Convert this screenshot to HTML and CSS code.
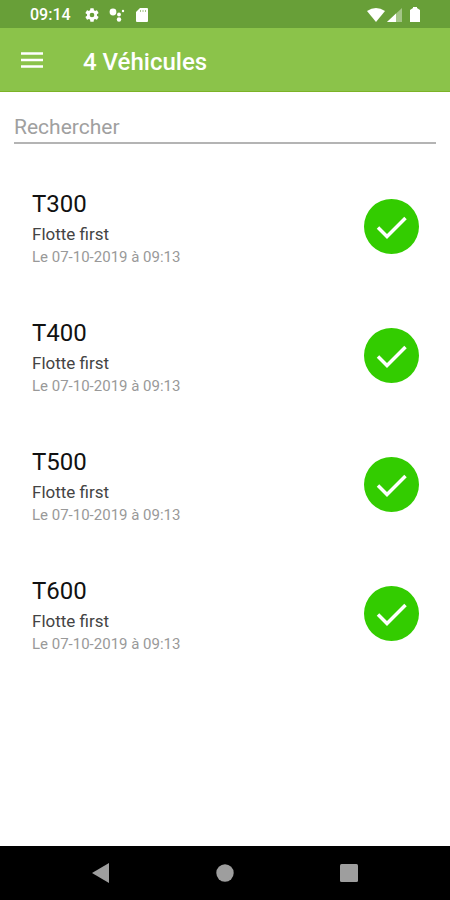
FILE: index.html
```html
<!DOCTYPE html>
<html lang="fr">
<head>
    <meta charset="UTF-8">
    <meta name="viewport" content="width=device-width, initial-scale=1.0">
    <title>Véhicules</title>
    <link rel="stylesheet" href="styles.css">
</head>
<body>
    <div class="statusbar">
        <span class="time">09:14</span>
        <svg class="gear" width="16" height="16" viewBox="0 0 24 24"><path fill="#fff" d="M19.4 13a7.5 7.5 0 0 0 0-2l2.2-1.700a.5.5 0 0 0 .1-.6l-2-3.500a.5.5 0 0 0-.6-.2l-2.500 1a7.300 7.300 0 0 0-1.700-1L14.500 2.400a.5.5 0 0 0-.5-.4h-4a.5.5 0 0 0-.5.400L9.100 5a7.700 7.700 0 0 0-1.700 1l-2.500-1a.5.5 0 0 0-.6.200l-2 3.500a.5.5 0 0 0 .1.600L4.600 11a7.900 7.900 0 0 0 0 2l-2.200 1.700a.5.5 0 0 0-.1.600l2 3.500c.1.200.4.300.6.200l2.500-1a7.300 7.300 0 0 0 1.700 1l.4 2.600c0 .2.200.4.500.4h4c.3 0 .5-.2.500-.4l.4-2.600a7.700 7.700 0 0 0 1.700-1l2.500 1c.2.100.5 0 .6-.2l2-3.500a.5.5 0 0 0-.1-.6zM12 15.500a3.500 3.500 0 1 1 0-7 3.500 3.500 0 0 1 0 7z"/></svg>
        <svg class="dots" width="16" height="16" viewBox="0 0 16 16" fill="#fff"><circle cx="4" cy="5" r="3.400"/><circle cx="10" cy="7.500" r="1.900"/><circle cx="10" cy="12.500" r="2.200"/><circle cx="14" cy="4" r="1.200"/></svg>
        <svg width="12" height="14" viewBox="0 0 12 14"><path fill="#fff" d="M4 0h7q1 0 1 1v12q0 1-1 1H1q-1 0-1-1V4z"/><path stroke="#689f38" stroke-opacity=".6" d="M4.500 2v2M7 2v2M9.500 2v2"/></svg>
        <span class="space"></span>
        <svg width="18" height="14" viewBox="0 0 18 14"><path fill="#fff" d="M0 3Q9-3 18 3L9 14z"/></svg>
        <svg class="signal" width="15" height="14" viewBox="0 0 15 14"><path fill="#fff" fill-opacity=".4" d="M15 0v14H0z"/><path fill="#fff" d="M9 5.600V14H0z"/></svg>
        <svg class="battery" width="10" height="15" viewBox="0 0 10 15"><path fill="#fff" d="M3 0h4v1L10 3v12H0V3l3-2z"/></svg>
    </div>

    <header class="toolbar">
        <button type="button" class="menubtn" aria-label="Menu">
            <svg width="22" height="16" viewBox="0 0 22 16"><path stroke="#fff" stroke-width="2.400" d="M0 1.500h22M0 8h22M0 14.500h22"/></svg>
        </button>
        <h1>4 Véhicules</h1>
    </header>

    <main>
        <form class="search">
            <input type="text" name="search" placeholder="Rechercher" aria-label="Rechercher">
        </form>
        <ul class="vehicles">
            <li class="vehicle">
                <div class="info">
                    <h2>T300</h2>
                    <p class="fleet">Flotte first</p>
                    <p class="date">Le 07-10-2019 à 09:13</p>
                </div>
                <svg class="check" viewBox="0 0 55 55"><circle cx="27.500" cy="27.500" r="27.500" fill="#33cc00"/><path fill="none" stroke="#fff" stroke-width="3.500" d="M14 28.500l9 9 18.500-18.500"/></svg>
            </li>
            <li class="vehicle">
                <div class="info">
                    <h2>T400</h2>
                    <p class="fleet">Flotte first</p>
                    <p class="date">Le 07-10-2019 à 09:13</p>
                </div>
                <svg class="check" viewBox="0 0 55 55"><circle cx="27.500" cy="27.500" r="27.500" fill="#33cc00"/><path fill="none" stroke="#fff" stroke-width="3.500" d="M14 28.500l9 9 18.500-18.500"/></svg>
            </li>
            <li class="vehicle">
                <div class="info">
                    <h2>T500</h2>
                    <p class="fleet">Flotte first</p>
                    <p class="date">Le 07-10-2019 à 09:13</p>
                </div>
                <svg class="check" viewBox="0 0 55 55"><circle cx="27.500" cy="27.500" r="27.500" fill="#33cc00"/><path fill="none" stroke="#fff" stroke-width="3.500" d="M14 28.500l9 9 18.500-18.500"/></svg>
            </li>
            <li class="vehicle">
                <div class="info">
                    <h2>T600</h2>
                    <p class="fleet">Flotte first</p>
                    <p class="date">Le 07-10-2019 à 09:13</p>
                </div>
                <svg class="check" viewBox="0 0 55 55"><circle cx="27.500" cy="27.500" r="27.500" fill="#33cc00"/><path fill="none" stroke="#fff" stroke-width="3.500" d="M14 28.500l9 9 18.500-18.500"/></svg>
            </li>
        </ul>
    </main>

    <nav class="navbar">
        <button type="button" aria-label="Retour"><svg width="20" height="20" viewBox="0 0 20 20"><path fill="#9e9e9e" d="M18 0v20L1 10z"/></svg></button>
        <button type="button" aria-label="Accueil"><svg width="20" height="20" viewBox="0 0 20 20"><circle cx="10" cy="10" r="8.700" fill="#9e9e9e"/></svg></button>
        <button type="button" aria-label="Applications"><svg width="20" height="20" viewBox="0 0 20 20"><rect x="1" y="1" width="18" height="18" rx="1.500" fill="#9e9e9e"/></svg></button>
    </nav>
</body>
</html>
```

FILE: styles.css
```css
* {
    box-sizing: border-box;
}
body {
    margin: 0;
    min-height: 100vh;
    display: flex;
    flex-direction: column;
    font-family: Roboto, "Liberation Sans", sans-serif;
    background: #fff;
}
h1, h2, p, ul {
    margin: 0;
    padding: 0;
}
button {
    padding: 0;
    border: none;
    background: none;
}
svg {
    display: block;
    flex: none;
}

.statusbar {
    display: flex;
    align-items: center;
    height: 28px;
    padding: 1px 30px 0;
    background: #689f38;
    color: #fff;
}
.time {
    font-size: 16px;
    font-weight: 500;
    line-height: 28px;
}
.gear {
    margin: 0 9px 0 13px;
}
.dots {
    margin-right: 11px;
}
.space {
    flex: 1;
}
.signal {
    margin: 0 8px 0 2px;
}

.toolbar {
    display: flex;
    align-items: center;
    height: 64px;
    padding: 0 21px;
    background: #8bc34a;
    border-bottom: 1px solid #7cb327;
    color: #fff;
}
.menubtn {
    margin-right: 40px;
}
.toolbar h1 {
    padding-top: 4px;
    font-size: 24px;
    font-weight: 500;
    line-height: 32px;
}

main {
    flex: 1;
}
.search {
    padding: 20px 14px 18px;
}
.search input {
    display: block;
    width: 100%;
    height: 32px;
    padding: 0;
    border: none;
    border-bottom: 2px solid #b4b4b4;
    outline: none;
    font-family: inherit;
    font-size: 21px;
    color: #212121;
}
.search input::placeholder {
    color: #a0a0a0;
}

.vehicles {
    list-style: none;
}
.vehicle {
    display: flex;
    align-items: center;
    justify-content: space-between;
    padding: 24px 31px 24px 32px;
}
.vehicle h2 {
    font-size: 24px;
    font-weight: 400;
    line-height: 36px;
    color: #111;
}
.fleet {
    font-size: 17px;
    line-height: 25px;
    color: #444;
}
.date {
    font-size: 15px;
    line-height: 20px;
    color: #999;
}
.check {
    width: 55px;
    height: 55px;
}

.navbar {
    display: flex;
    align-items: center;
    justify-content: space-between;
    height: 54px;
    padding: 0 91px;
    background: #000;
}
```
